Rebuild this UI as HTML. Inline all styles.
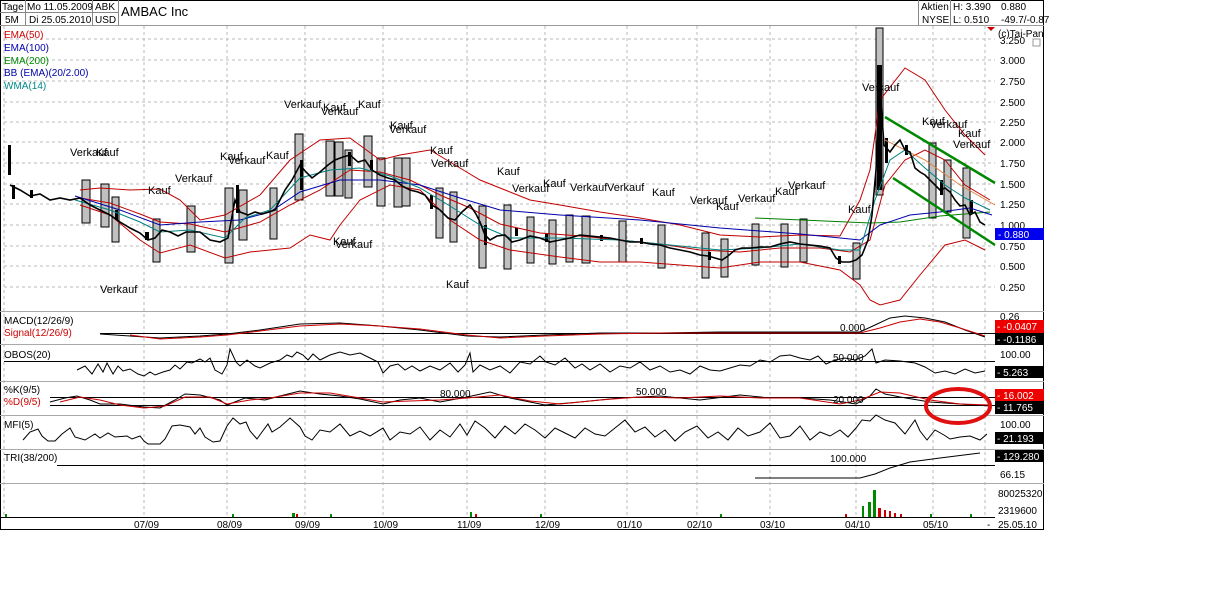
<!DOCTYPE html>
<html><head><meta charset="utf-8"><style>
html,body{margin:0;padding:0;background:#fff;width:1226px;height:589px;overflow:hidden}
svg{display:block;font-family:"Liberation Sans",sans-serif}
</style></head><body>
<svg width="1226" height="589" viewBox="0 0 1226 589" xmlns="http://www.w3.org/2000/svg">
<rect x="0" y="0" width="1226" height="589" fill="#fff"/>
<rect x="0.5" y="0.5" width="1043" height="529" fill="none" stroke="#000"/>
<g font-size="10" fill="#000">
<line x1="0" y1="12.5" x2="118" y2="12.5" stroke="#888"/>
<line x1="0" y1="25.5" x2="1044" y2="25.5" stroke="#999"/>
<line x1="25.5" y1="0" x2="25.5" y2="25" stroke="#888"/>
<line x1="92.5" y1="0" x2="92.5" y2="25" stroke="#888"/>
<line x1="118.5" y1="0" x2="118.5" y2="25" stroke="#888"/>
<text x="2" y="10">Tage</text><text x="27" y="10">Mo 11.05.2009</text><text x="95" y="10">ABK</text>
<text x="5" y="23">5M</text><text x="29" y="23">Di 25.05.2010</text><text x="95" y="23">USD</text>
<text x="121" y="16" font-size="13">AMBAC Inc</text>
<line x1="918.5" y1="0" x2="918.5" y2="25" stroke="#888"/>
<line x1="950.5" y1="0" x2="950.5" y2="25" stroke="#888"/>
<text x="921" y="10">Aktien</text><text x="922" y="23">NYSE</text>
<text x="953" y="10">H: 3.390</text><text x="953" y="23">L: 0.510</text>
<text x="1001" y="10">0.880</text><text x="1001" y="23">-49.7/-0.87</text>
</g>
<g stroke="#bbb" stroke-dasharray="3,3">
<line x1="4" y1="39" x2="995" y2="39"/><line x1="4" y1="60" x2="995" y2="60"/><line x1="4" y1="81" x2="995" y2="81"/>
<line x1="4" y1="102" x2="995" y2="102"/><line x1="4" y1="122" x2="995" y2="122"/><line x1="4" y1="142" x2="995" y2="142"/>
<line x1="4" y1="163" x2="995" y2="163"/><line x1="4" y1="184" x2="995" y2="184"/><line x1="4" y1="204" x2="995" y2="204"/>
<line x1="4" y1="225" x2="995" y2="225"/><line x1="4" y1="246" x2="995" y2="246"/><line x1="4" y1="266" x2="995" y2="266"/><line x1="4" y1="287" x2="995" y2="287"/>
<line x1="4" y1="26" x2="4" y2="517"/>
<line x1="144" y1="26" x2="144" y2="517"/><line x1="227" y1="26" x2="227" y2="517"/><line x1="305" y1="26" x2="305" y2="517"/>
<line x1="383" y1="26" x2="383" y2="517"/><line x1="467" y1="26" x2="467" y2="517"/><line x1="545" y1="26" x2="545" y2="517"/>
<line x1="627" y1="26" x2="627" y2="517"/><line x1="697" y1="26" x2="697" y2="517"/><line x1="770" y1="26" x2="770" y2="517"/>
<line x1="856" y1="26" x2="856" y2="517"/><line x1="933" y1="26" x2="933" y2="517"/><line x1="985" y1="26" x2="985" y2="517"/>
</g>
<g stroke="#aaa">
<line x1="0" y1="311.5" x2="1044" y2="311.5"/><line x1="0" y1="344.5" x2="1044" y2="344.5"/><line x1="0" y1="381.5" x2="1044" y2="381.5"/>
<line x1="0" y1="415.5" x2="1044" y2="415.5"/><line x1="0" y1="449.5" x2="1044" y2="449.5"/><line x1="0" y1="483.5" x2="1044" y2="483.5"/>
</g>
<line x1="0" y1="517.5" x2="995" y2="517.5" stroke="#000"/>
<g fill="#c0c0c0" stroke="#000" stroke-width="1">
<rect x="82" y="180" width="8" height="43"/><rect x="101" y="184" width="8" height="43"/><rect x="112" y="197" width="7" height="45"/>
<rect x="153" y="219" width="7" height="43"/><rect x="187" y="206" width="8" height="46"/><rect x="225" y="188" width="8" height="75"/>
<rect x="239" y="190" width="8" height="50"/><rect x="270" y="188" width="7" height="51"/><rect x="295" y="134" width="8" height="66"/>
<rect x="326" y="141" width="8" height="55"/><rect x="335" y="142" width="8" height="54"/><rect x="345" y="150" width="7" height="48"/>
<rect x="364" y="136" width="8" height="51"/><rect x="377" y="158" width="8" height="48"/><rect x="394" y="158" width="8" height="49"/>
<rect x="402" y="158" width="8" height="48"/><rect x="436" y="188" width="7" height="50"/><rect x="450" y="192" width="7" height="50"/>
<rect x="479" y="206" width="7" height="62"/><rect x="504" y="205" width="7" height="64"/><rect x="527" y="217" width="7" height="46"/>
<rect x="549" y="220" width="7" height="44"/><rect x="566" y="215" width="7" height="47"/><rect x="582" y="216" width="8" height="47"/>
<rect x="619" y="221" width="7" height="41"/><rect x="658" y="225" width="7" height="43"/><rect x="702" y="233" width="7" height="45"/>
<rect x="721" y="239" width="7" height="38"/><rect x="752" y="224" width="7" height="41"/><rect x="781" y="224" width="7" height="43"/>
<rect x="800" y="219" width="7" height="43"/><rect x="853" y="243" width="7" height="36"/><rect x="876" y="28" width="7" height="167"/>
<rect x="929" y="143" width="7" height="75"/><rect x="944" y="160" width="7" height="52"/><rect x="963" y="168" width="7" height="70"/>
</g>
<rect x="877" y="65" width="5" height="125" fill="#000"/>
<rect x="8" y="145" width="3" height="30" fill="#000"/>
<g fill="#000">
<rect x="12" y="185" width="3" height="14"/><rect x="30" y="190" width="3" height="8"/><rect x="115" y="210" width="3" height="10"/>
<rect x="145" y="232" width="4" height="8"/><rect x="236" y="185" width="3" height="28"/><rect x="300" y="160" width="3" height="30"/>
<rect x="348" y="152" width="3" height="14"/><rect x="370" y="160" width="3" height="10"/><rect x="430" y="195" width="3" height="14"/>
<rect x="484" y="225" width="3" height="20"/><rect x="515" y="228" width="3" height="8"/><rect x="545" y="234" width="3" height="8"/>
<rect x="600" y="235" width="3" height="6"/><rect x="640" y="238" width="3" height="6"/><rect x="708" y="252" width="3" height="8"/>
<rect x="838" y="256" width="3" height="8"/><rect x="885" y="138" width="3" height="25"/><rect x="905" y="145" width="3" height="10"/>
<rect x="940" y="180" width="3" height="15"/><rect x="970" y="200" width="3" height="14"/>
</g>
<g fill="none" stroke="#c00000" stroke-width="1">
<polyline points="80,190 100,188 130,190 160,189 180,200 200,220 225,215 260,195 290,160 320,140 350,138 380,160 400,155 430,150 460,168 480,180 500,188 530,200 560,205 600,212 640,218 680,225 720,235 760,237 800,235 840,236 860,200 870,170 880,100 905,68 925,80 945,110 965,135 985,155"/>
<polyline points="80,205 110,215 140,240 160,253 190,245 225,258 250,252 290,248 310,235 330,240 340,225 360,200 390,185 420,190 450,220 480,240 510,250 560,257 600,262 640,262 680,265 720,268 760,262 800,262 840,270 860,285 870,300 880,305 900,300 920,275 945,245 965,240 985,250"/>
<polyline points="80,198 110,203 140,214 160,222 190,224 225,232 260,222 290,205 320,190 350,170 380,172 410,180 440,195 470,208 500,224 540,233 580,236 620,240 660,244 700,250 740,252 780,248 820,248 850,252 870,240 885,185 905,160 925,150 945,160 965,185 990,200"/>
</g>
<polyline fill="none" stroke="#008000" points="755,218 870,223 900,222 940,216 990,212"/>
<polyline fill="none" stroke="#00a" points="75,196 120,210 160,225 200,222 240,220 270,212 300,192 340,180 380,180 420,185 460,198 500,210 560,215 640,220 720,228 800,234 860,240 880,225 910,215 940,212 970,208 992,215"/>
<polyline fill="none" stroke="#008080" points="75,200 110,210 140,222 160,232 190,230 225,238 245,218 270,210 300,178 330,170 360,168 390,176 420,188 450,206 480,225 510,238 560,238 620,240 680,246 720,250 760,248 800,244 840,250 860,250 875,200 890,160 905,150 925,168 945,185 965,198 990,210"/>
<polyline fill="none" stroke="#e08040" points="885,140 925,160 960,185 995,205"/>
<polyline fill="none" stroke="#000" stroke-width="1.6" points="10,185 20,190 30,196 40,194 50,200 60,198 70,200 80,198 90,205 100,210 110,215 120,222 130,228 140,233 148,240 155,238 162,230 170,232 178,236 186,232 200,232 210,240 220,242 228,238 235,200 240,212 248,215 255,212 262,214 275,210 285,190 292,180 300,165 306,172 312,178 320,172 328,165 335,160 343,157 350,155 358,162 365,160 372,170 380,175 388,178 395,180 402,186 410,190 418,192 425,195 432,205 440,210 448,218 455,220 462,212 470,205 476,214 480,222 485,235 490,240 497,236 505,235 512,242 520,240 530,236 540,238 550,242 560,240 570,238 580,235 590,236 600,237 610,238 620,240 630,242 640,242 650,244 660,245 670,248 680,250 690,252 700,255 708,256 715,258 722,260 728,256 735,250 742,248 750,248 760,247 770,247 780,244 790,242 800,244 810,245 820,246 830,248 836,258 842,262 850,262 856,260 862,255 868,240 872,215 876,170 880,90 884,145 890,152 895,145 900,140 905,150 910,152 915,168 920,172 925,175 930,180 935,185 940,190 945,188 950,192 955,200 960,206 965,205 970,215 975,212 980,222 985,225"/>
<line x1="885" y1="117" x2="995" y2="183" stroke="#080" stroke-width="2.5"/>
<line x1="893" y1="178" x2="995" y2="245" stroke="#080" stroke-width="2.5"/>
<g font-size="11" fill="#000">
<text x="70" y="156">Verkauf</text><text x="96" y="156">Kauf</text><text x="148" y="194">Kauf</text><text x="175" y="182">Verkauf</text>
<text x="220" y="160">Kauf</text><text x="228" y="164">Verkauf</text><text x="266" y="159">Kauf</text><text x="284" y="108">Verkauf</text>
<text x="323" y="111">Kauf</text><text x="321" y="115">Verkauf</text><text x="358" y="108">Kauf</text><text x="390" y="129">Kauf</text>
<text x="389" y="133">Verkauf</text><text x="430" y="154">Kauf</text><text x="431" y="167">Verkauf</text><text x="497" y="175">Kauf</text>
<text x="512" y="192">Verkauf</text><text x="543" y="187">Kauf</text><text x="570" y="191">Verkauf</text><text x="607" y="191">Verkauf</text>
<text x="652" y="196">Kauf</text><text x="690" y="204">Verkauf</text><text x="716" y="210">Kauf</text><text x="738" y="202">Verkauf</text>
<text x="775" y="195">Kauf</text><text x="788" y="189">Verkauf</text><text x="848" y="213">Kauf</text><text x="862" y="91">Verkauf</text>
<text x="922" y="125">Kauf</text><text x="930" y="128">Verkauf</text><text x="958" y="137">Kauf</text><text x="953" y="148">Verkauf</text>
<text x="333" y="245">Kauf</text><text x="335" y="248">Verkauf</text><text x="100" y="293">Verkauf</text><text x="446" y="288">Kauf</text>
</g>
<g font-size="10">
<text x="4" y="38" fill="#c00">EMA(50)</text><text x="4" y="51" fill="#00a">EMA(100)</text><text x="4" y="64" fill="#080">EMA(200)</text>
<text x="4" y="76" fill="#00a">BB (EMA)(20/2.00)</text><text x="4" y="89" fill="#088">WMA(14)</text>
</g>
<g font-size="10" fill="#000">
<text x="998" y="37">(c)Tai-Pan</text><text x="1000" y="44">3.250</text>
<text x="1000" y="64">3.000</text><text x="1000" y="85">2.750</text><text x="1000" y="106">2.500</text><text x="1000" y="126">2.250</text>
<text x="1000" y="146">2.000</text><text x="1000" y="167">1.750</text><text x="1000" y="188">1.500</text><text x="1000" y="208">1.250</text>
<text x="1000" y="229">1.000</text><text x="1000" y="250">0.750</text><text x="1000" y="270">0.500</text><text x="1000" y="291">0.250</text>
</g>
<polygon points="987,27 995,27 991,31" fill="#c00"/>
<rect x="1033" y="39" width="7" height="7" fill="none" stroke="#999"/>
<rect x="995" y="228" width="49" height="12" fill="#0000ee"/>
<text x="998" y="238" font-size="10" fill="#fff">- 0.880</text>
<line x1="100" y1="333.5" x2="995" y2="333.5" stroke="#000"/>
<polyline fill="none" stroke="#000" points="100,334 130,336 160,338 200,336 227,334 260,330 300,324 340,323 380,326 420,330 467,336 500,337 545,335 600,333 660,333 720,332 800,332 860,332 875,325 890,318 905,316 925,318 945,322 965,330 985,337"/>
<polyline fill="none" stroke="#c00" points="130,335 160,339 200,337 227,335 260,331 300,326 340,324 380,326 420,329 467,335 500,338 545,336 600,334 660,333 720,333 800,333 860,333 880,328 900,322 920,319 940,322 960,328 985,336"/>
<text x="4" y="324" font-size="10">MACD(12/26/9)</text><text x="4" y="336" font-size="10" fill="#c00">Signal(12/26/9)</text>
<text x="840" y="331" font-size="10">0.000</text>
<text x="1000" y="320" font-size="10">0.26</text>
<rect x="995" y="320" width="49" height="13" fill="#e00"/><text x="997" y="330" font-size="10" fill="#fff">- -0.0407</text>
<rect x="995" y="333" width="49" height="12" fill="#000"/><text x="997" y="343" font-size="10" fill="#fff">- -0.1186</text>
<line x1="4" y1="361.5" x2="995" y2="361.5" stroke="#000"/>
<polyline fill="none" stroke="#000" points="77,370 85,366 92,374 98,364 103,372 107,363 113,374 118,366 123,371 130,369 138,374 144,376 150,372 155,375 163,372 170,370 175,365 180,369 187,362 192,363 200,359 205,362 210,358 215,370 222,374 227,365 230,349 236,362 240,366 247,360 255,366 260,368 270,363 280,360 287,355 292,357 297,352 303,355 308,360 313,354 320,360 330,355 340,352 350,355 360,353 370,358 378,362 383,373 390,366 398,364 405,370 412,366 420,371 430,366 440,370 450,363 458,372 465,365 470,353 473,372 480,365 490,370 500,366 510,373 520,362 530,364 540,356 546,362 555,365 565,358 575,368 582,364 590,370 600,364 610,372 620,366 630,368 640,362 650,370 660,366 670,372 680,370 690,374 700,366 710,370 720,371 730,368 740,365 750,366 760,360 770,362 780,356 790,355 800,358 810,360 818,356 826,364 835,360 845,358 855,360 865,356 872,349 876,363 885,360 900,361 915,363 925,367 935,373 945,371 955,374 965,369 975,373 985,371"/>
<text x="4" y="358" font-size="10">OBOS(20)</text><text x="833" y="361" font-size="10">50.000</text>
<text x="1000" y="358" font-size="10">100.00</text>
<rect x="995" y="366" width="49" height="12" fill="#000"/><text x="997" y="376" font-size="10" fill="#fff">- 5.263</text>
<line x1="50" y1="397.5" x2="995" y2="397.5" stroke="#000"/>
<line x1="50" y1="405.5" x2="995" y2="405.5" stroke="#000"/>
<polyline fill="none" stroke="#000" points="50,402 65,398 77,396 90,400 100,404 120,404 144,407 160,408 175,400 185,394 200,395 220,400 227,405 245,398 265,400 280,396 300,391 320,394 340,396 360,399 383,404 400,400 420,398 440,402 467,397 490,392 510,398 545,405 580,402 620,398 660,396 700,400 740,395 770,398 800,398 830,400 856,404 870,396 876,389 885,394 900,397 930,402 960,404 990,406"/>
<polyline fill="none" stroke="#c00" points="60,402 80,397 100,400 120,405 144,408 165,406 185,397 210,397 227,404 250,400 270,398 300,393 330,393 360,398 383,402 410,401 440,400 467,398 500,395 530,401 560,404 600,400 640,397 680,398 720,396 760,398 800,398 840,404 860,400 880,392 900,393 930,400 960,404 990,405"/>
<text x="4" y="393" font-size="10">%K(9/5)</text><text x="4" y="405" font-size="10" fill="#c00">%D(9/5)</text>
<text x="440" y="397" font-size="10">80.000</text><text x="636" y="395" font-size="10">50.000</text><text x="833" y="403" font-size="10">20.000</text>
<rect x="995" y="389" width="49" height="12" fill="#e00"/><text x="997" y="399" font-size="10" fill="#fff">- 16.002</text>
<rect x="995" y="401" width="49" height="13" fill="#000"/><text x="997" y="411" font-size="10" fill="#fff">- 11.765</text>
<ellipse cx="958" cy="406" rx="32" ry="17" fill="none" stroke="#e01010" stroke-width="4"/>
<polyline fill="none" stroke="#000" points="23,440 30,432 38,429 42,436 48,441 55,441 62,434 70,428 75,437 85,440 95,434 100,438 108,433 115,437 127,436 132,439 140,436 144,441 148,444 160,444 165,439 172,426 180,425 190,427 195,434 200,428 205,437 213,442 220,441 227,426 233,418 240,424 246,422 250,431 257,439 262,432 268,424 272,432 280,427 290,418 300,427 305,436 312,440 320,430 330,432 340,424 350,436 360,431 370,436 383,428 390,440 400,432 410,434 420,427 430,440 440,430 450,437 460,424 467,435 475,421 485,428 495,438 505,426 515,434 525,424 535,430 545,438 555,428 565,433 575,438 585,428 595,434 605,436 615,428 625,420 635,432 645,427 655,437 665,430 675,441 685,432 697,426 708,438 718,432 728,440 738,428 748,436 760,432 770,423 780,438 790,436 800,426 810,440 820,432 830,436 840,430 848,437 856,428 862,420 870,421 876,415 885,420 895,423 905,434 910,427 915,420 920,431 927,440 935,430 944,435 950,439 960,437 970,436 980,440 987,434"/>
<text x="4" y="428" font-size="10">MFI(5)</text><text x="1000" y="428" font-size="10">100.00</text>
<rect x="995" y="432" width="49" height="12" fill="#000"/><text x="997" y="442" font-size="10" fill="#fff">- 21.193</text>
<line x1="57" y1="465.5" x2="995" y2="465.5" stroke="#000"/>
<polyline fill="none" stroke="#000" points="755,478 860,478 875,474 890,468 910,462 940,458 980,453"/>
<text x="4" y="461" font-size="10">TRI(38/200)</text><text x="830" y="462" font-size="10">100.000</text>
<rect x="995" y="450" width="49" height="12" fill="#000"/><text x="997" y="460" font-size="10" fill="#fff">- 129.280</text>
<text x="1000" y="478" font-size="10">66.15</text>
<g fill="#080">
<rect x="5" y="514" width="2" height="3"/><rect x="232" y="514" width="2" height="3"/><rect x="292" y="513" width="3" height="4"/>
<rect x="330" y="514" width="2" height="3"/><rect x="470" y="512" width="2" height="5"/><rect x="862" y="506" width="2" height="11"/>
<rect x="868" y="502" width="3" height="15"/><rect x="873" y="490" width="3" height="27"/><rect x="930" y="514" width="2" height="3"/>
<rect x="970" y="514" width="2" height="3"/><rect x="540" y="514" width="2" height="3"/><rect x="720" y="514" width="2" height="3"/>
</g>
<g fill="#c00">
<rect x="296" y="514" width="2" height="3"/><rect x="878" y="508" width="3" height="9"/><rect x="884" y="510" width="2" height="7"/>
<rect x="889" y="511" width="2" height="6"/><rect x="894" y="513" width="2" height="4"/><rect x="475" y="514" width="2" height="3"/>
<rect x="900" y="514" width="2" height="3"/><rect x="845" y="514" width="2" height="3"/>
</g>
<text x="998" y="497" font-size="10">80025320</text><text x="998" y="514" font-size="10">2319600</text>
<g font-size="10" fill="#000">
<text x="134" y="528">07/09</text><text x="217" y="528">08/09</text><text x="295" y="528">09/09</text><text x="373" y="528">10/09</text>
<text x="457" y="528">11/09</text><text x="535" y="528">12/09</text><text x="617" y="528">01/10</text><text x="687" y="528">02/10</text>
<text x="760" y="528">03/10</text><text x="845" y="528">04/10</text><text x="923" y="528">05/10</text><text x="987" y="528">-</text>
<text x="998" y="528">25.05.10</text>
</g>
</svg>
</body></html>
